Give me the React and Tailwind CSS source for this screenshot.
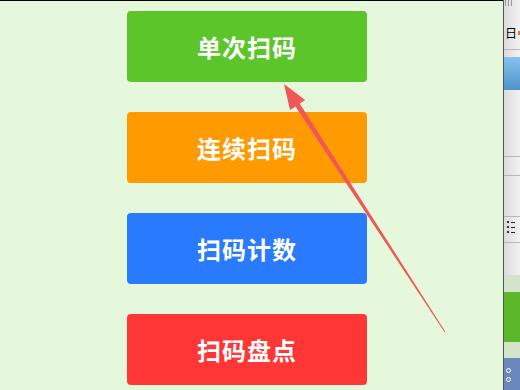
const buttons = [
  { label: "单次扫码", color: "bg-[#5cc52a]" },
  { label: "连续扫码", color: "bg-[#ff9a00]" },
  { label: "扫码计数", color: "bg-[#2a7afe]" },
  { label: "扫码盘点", color: "bg-[#ff3636]" },
];

// narrow toolbar that peeks in at the right edge
function SideStrip() {
  return (
    <div className="w-[17px] h-full flex flex-col border-l border-[#555] bg-gradient-to-r from-[#dcdcdc] to-[#f2f2f2] overflow-hidden">
      <div className="h-[26px] shrink-0 flex gap-[2px] pl-[1px]">
        <div className="w-[1px] h-[6px] bg-[#999]" />
        <div className="w-[1px] h-[6px] bg-[#999]" />
        <div className="w-[1px] h-[6px] bg-[#999]" />
      </div>
      <div className="h-[14px] shrink-0 flex items-center justify-between pl-[1px]">
        <span className="text-[12px] leading-none text-black">日</span>
        <div className="w-[2px] h-[4px] bg-[#e87a1a]" />
      </div>
      <div className="h-[10px] shrink-0 border-b border-[#b8b8b8]" />
      <div className="h-[7px] shrink-0" />
      <div className="h-[33px] shrink-0 bg-gradient-to-b from-[#86c1ec] to-[#4f94cc]" />
      <div className="h-[67px] shrink-0 border-b border-[#b8b8b8]" />
      <div className="h-[19px] shrink-0 border-b border-[#b8b8b8]" />
      <div className="h-[41px] shrink-0 border-b border-[#b8b8b8]" />
      <div className="h-[26px] shrink-0 border-b border-[#b8b8b8] flex flex-col gap-[3px] pl-[3px] pt-[4px]">
        {[0, 1, 2].map((i) => (
          <div key={i} className="flex items-center gap-[2px]">
            <div className="w-[2px] h-[2px] bg-[#333]" />
            <div className="w-[4px] h-[1px] bg-[#222]" />
          </div>
        ))}
      </div>
      <div className="h-[32px] shrink-0" />
      <div className="h-[17px] shrink-0 bg-[#d3e4ca]" />
      <div className="h-[50px] shrink-0 bg-[#5cb82b]" />
      <div className="h-[16px] shrink-0 bg-[#d3e4ca]" />
      <div className="flex-1 bg-[#6b88bd] flex flex-col gap-[4px] pl-[2px] pt-[10px]">
        <div className="w-[5px] h-[5px] rounded-full border border-white" />
        <div className="w-[5px] h-[5px] rounded-full border border-white" />
      </div>
    </div>
  );
}

export default function App() {
  return (
    <div className="relative w-[520px] h-[390px] overflow-hidden flex bg-[#e6f8dc]" style={{ fontFamily: '"Noto Sans CJK SC", "Noto Sans", sans-serif' }}>
      <div className="w-[503px] h-full border-t border-black">
        <div className="flex flex-col gap-[30px] pl-[127px] pt-[10px]">
          {buttons.map((b) => (
            <div
              key={b.label}
              className={`w-[240px] h-[71px] rounded-[4px] ${b.color} flex items-center justify-center text-white text-[24px] font-bold tracking-[1px]`}
            >
              {b.label}
            </div>
          ))}
        </div>
      </div>
      <SideStrip />

      {/* annotation arrow */}
      <svg className="absolute inset-0 pointer-events-none" width="520" height="390" viewBox="0 0 520 390">
        <polygon
          points="284,84 290,110 295.5,106.4 444.6,332.3 445.4,331.7 299.7,103.6 305.2,100.1"
          fill="#f05757"
        />
      </svg>
    </div>
  );
}
